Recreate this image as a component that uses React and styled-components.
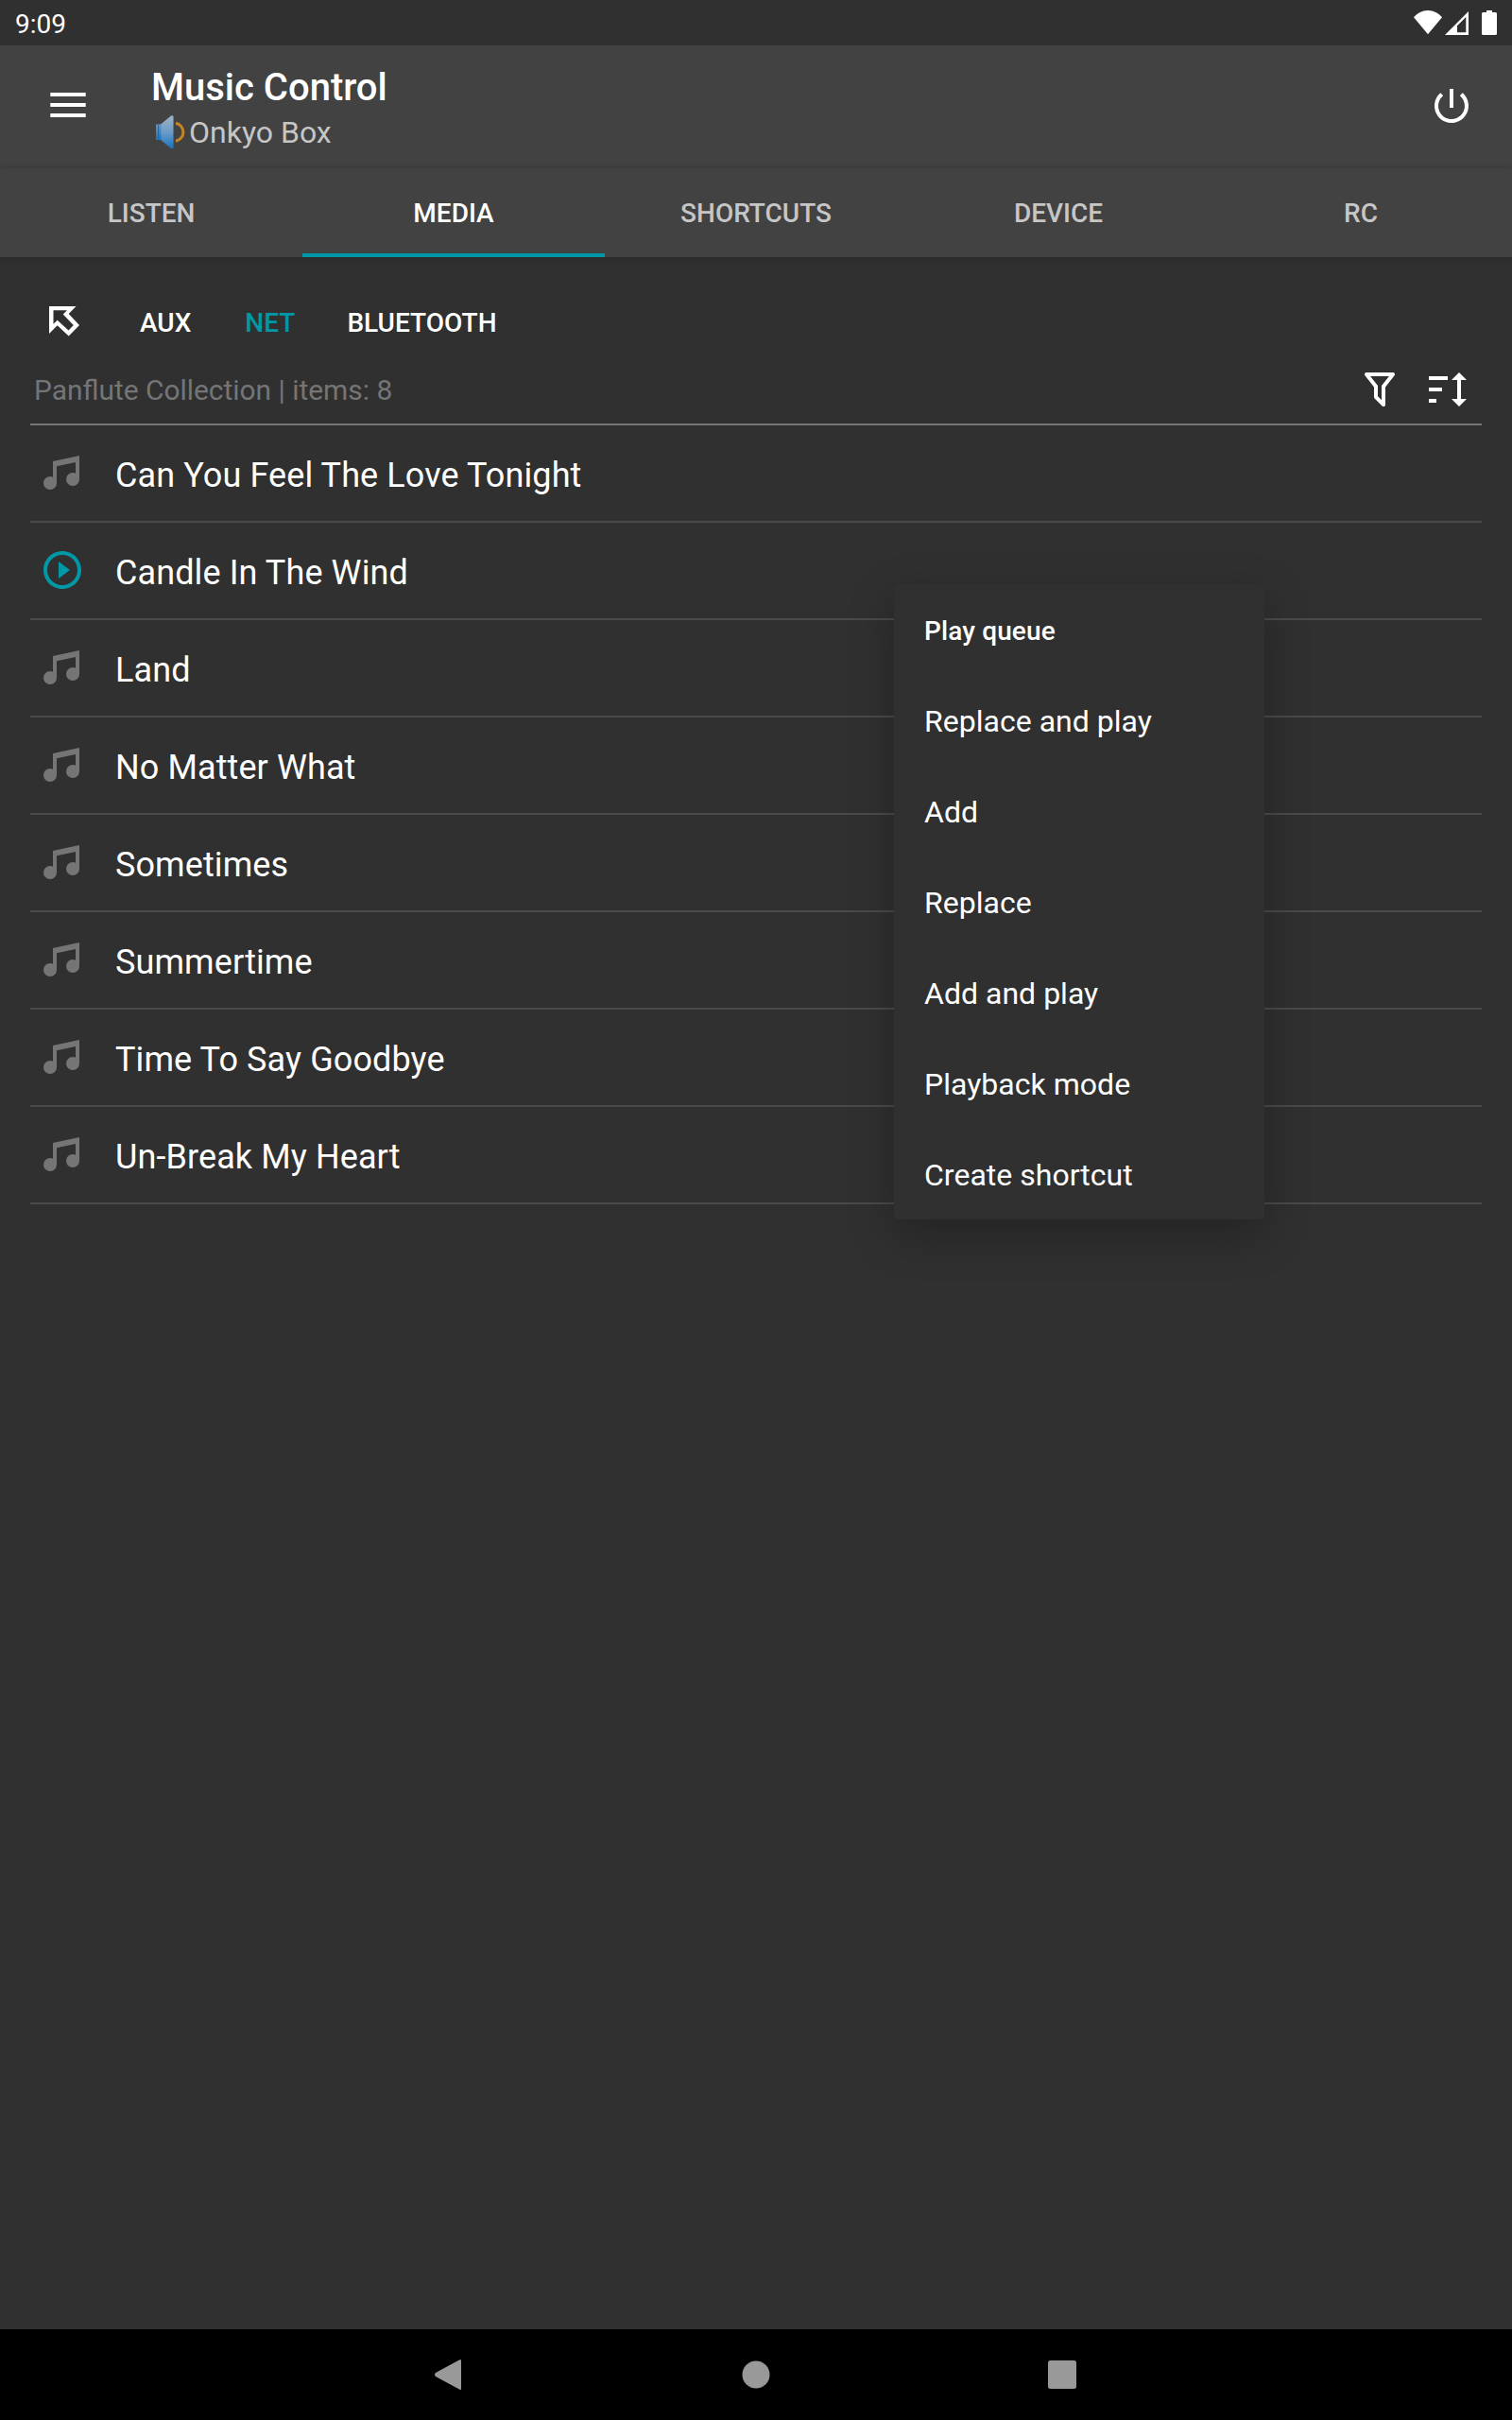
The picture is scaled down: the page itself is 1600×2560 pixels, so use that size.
import React from "react";
import styled, { createGlobalStyle } from "styled-components";

const GlobalStyle = createGlobalStyle`
  * { box-sizing: border-box; }
  body { margin: 0; background: #303030; font-family: Roboto, "Noto Sans", sans-serif; color: #fff; }
  svg { display: block; flex: none; }
`;

const Screen = styled.div`
  position: relative;
  width: 1600px;
  height: 2560px;
  display: flex;
  flex-direction: column;
  background: #303030;
  overflow: hidden;
`;

const StatusBar = styled.header`
  height: 48px;
  display: flex;
  align-items: center;
  justify-content: space-between;
  padding: 0 14px 0 16px;
`;

const Clock = styled.div`
  padding-top: 3px;
  font-size: 28px;
  line-height: 44px;
`;

const Toolbar = styled.div`
  height: 128px;
  display: flex;
  align-items: center;
  padding: 0 40px 0 48px;
  background: #424242;
`;

const MenuButton = styled.div`
  width: 112px;
  padding: 0 0 2px 5px;
`;

const Titles = styled.div`
  flex: 1;
  display: flex;
  flex-direction: column;
  padding-top: 8px;
`;

const Title = styled.h1`
  margin: 0;
  font-size: 40px;
  font-weight: 500;
  line-height: 48px;
`;

const Subtitle = styled.div`
  display: flex;
  align-items: center;
  padding-left: 5px;
  font-size: 32px;
  line-height: 47px;
  color: #c6c6c6;
`;

const Tabs = styled.nav`
  height: 96px;
  display: flex;
  background: #424242;
  box-shadow: inset 0 2px 1px rgba(0, 0, 0, 0.09), 0 2px 6px rgba(0, 0, 0, 0.12);
`;

const Tab = styled.div`
  flex: 1;
  display: flex;
  align-items: center;
  justify-content: center;
  padding-top: 7px;
  font-size: 28px;
  font-weight: 500;
  color: ${(p) => (p.$active ? "#fff" : "#c6c6c6")};
  border-bottom: 4px solid ${(p) => (p.$active ? "#0097a7" : "transparent")};
`;

const Content = styled.main`
  flex: 1;
  padding: 20px 32px 0;
`;

const Sources = styled.div`
  height: 96px;
  display: flex;
  align-items: center;
  padding-left: 10px;
`;

const SourceIcon = styled.div`
  width: 106px;
  padding-bottom: 4px;
`;

const Source = styled.div`
  margin-right: ${(p) => p.$gap || 0}px;
  padding-top: 3px;
  font-size: 28px;
  font-weight: 500;
  color: ${(p) => (p.$active ? "#0097a7" : "#fff")};
`;

const ListHeader = styled.div`
  height: 62px;
  display: flex;
  gap: 24px;
  padding: 0 12px 12px 4px;
  align-items: center;
  border-bottom: 2px solid #757575;
`;

const Path = styled.div`
  flex: 1;
  padding-top: 2px;
  font-size: 29.9px;
  line-height: 46px;
  color: #757575;
`;

const Row = styled.div`
  height: 103px;
  display: flex;
  align-items: center;
  padding: 0 10px 1px;
  border-bottom: 2px solid #4a4a4a;
`;

const RowLabel = styled.div`
  padding: 5px 0 0 32px;
  font-size: 36px;
  line-height: 44px;
  letter-spacing: 0.1px;
`;

const Popup = styled.div`
  position: absolute;
  left: 946px;
  top: 618px;
  width: 392px;
  border-radius: 4px;
  background: #303030;
  box-shadow: 0 16px 48px rgba(0, 0, 0, 0.27);
`;

const PopupItem = styled.div`
  height: 96px;
  display: flex;
  align-items: center;
  padding: 2px 32px 0;
  font-size: ${(p) => (p.$heading ? 28 : 32)}px;
  font-weight: ${(p) => (p.$heading ? 500 : 400)};
  letter-spacing: ${(p) => (p.$heading ? 0.12 : 0.02)}px;
`;

const NavBar = styled.footer`
  height: 96px;
  display: flex;
  align-items: center;
  justify-content: center;
  gap: 276px;
  background: #000;
`;

const Icon = ({ d, fill = "#fff" }) => (
  <svg width="48" height="48" viewBox="0 0 24 24" fill={fill}>
    <path d={d} />
  </svg>
);

const POWER =
  "M13 3h-2v10h2V3zm4.83 2.17l-1.42 1.42C17.99 7.86 19 9.81 19 12c0 3.87-3.13 7-7 7s-7-3.13-7-7c0-2.19 1.01-4.14 2.58-5.42L6.17 5.17C4.23 6.82 3 9.26 3 12c0 4.97 4.03 9 9 9s9-4.03 9-9c0-2.74-1.23-5.18-3.17-6.83z";
const NOTE =
  "M21,3V15.5A3.5,3.5 0 0,1 17.5,19A3.5,3.5 0 0,1 14,15.5A3.5,3.5 0 0,1 17.5,12C18.04,12 18.55,12.12 19,12.34V6.47L9,8.6V17.5A3.5,3.5 0 0,1 5.5,21A3.5,3.5 0 0,1 2,17.5A3.5,3.5 0 0,1 5.5,14C6.04,14 6.55,14.12 7,14.34V6L21,3Z";
const PLAY =
  "M10 16.5l6-4.5-6-4.5v9zM12 2C6.48 2 2 6.48 2 12s4.48 10 10 10 10-4.48 10-10S17.52 2 12 2zm0 18c-4.41 0-8-3.59-8-8s3.59-8 8-8 8 3.59 8 8-3.59 8-8 8z";
const FILTER =
  "M15,19.88C15.04,20.18 14.94,20.5 14.71,20.71C14.32,21.1 13.69,21.1 13.3,20.71L9.29,16.7C9.06,16.47 8.96,16.16 9,15.87V10.75L4.21,4.62C3.87,4.19 3.95,3.56 4.38,3.22C4.57,3.08 4.78,3 5,3V3H19V3C19.22,3 19.43,3.08 19.62,3.22C20.05,3.56 20.13,4.19 19.79,4.62L15,10.75V19.88M7.04,5L11,10.06V15.58L13,17.58V10.05L16.96,5H7.04Z";
const SORT = "M18 21L14 17H17V7H14L18 3L22 7H19V17H22L18 21ZM2 5H12V7H2ZM2 11H9V13H2ZM2 17H6V19H2Z";

const StatusIcons = () => (
  <svg width="92" height="28" viewBox="1494 10 92 28" fill="#fff">
    <path d="M1496 18.3C1500 14 1505 11 1511 11S1522 14 1526 18.3L1511 36.3Z" />
    <path fillRule="evenodd" d="M1554 12V37H1529ZM1551.3 18L1542 27.3V34.3H1551.3Z" />
    <path d="M1573 11h6v2h3.400a1.600 1.600 0 0 1 1.600 1.600v20.800a1.600 1.600 0 0 1-1.600 1.600h-12.800a1.600 1.600 0 0 1-1.600-1.600v-20.800a1.600 1.600 0 0 1 1.600-1.600h3.400z" />
  </svg>
);

const Speaker = () => (
  <svg width="35" height="36" viewBox="0 0 35 36">
    <defs>
      <linearGradient id="cone" x1="0" y1="0" x2="0" y2="1">
        <stop offset="0" stopColor="#a3b3c2" />
        <stop offset="0.5" stopColor="#6b9cc8" />
        <stop offset="1" stopColor="#1a73bd" />
      </linearGradient>
      <linearGradient id="magnet" x1="0" y1="0" x2="0" y2="1">
        <stop offset="0" stopColor="#6396c4" />
        <stop offset="1" stopColor="#1c74bd" />
      </linearGradient>
    </defs>
    <path d="M5 9.500L16 0.500Q18.300-0.400 18.500 1.500V34Q18.300 36 16 35L5 26Z" fill="url(#cone)" />
    <path d="M0 9.500H5.500V26H0Z" fill="url(#magnet)" />
    <path d="M2.500 9.500V26" stroke="#2469a3" strokeWidth="1" />
    <path d="M21 8.300A9.600 9.600 0 0 1 21 27.200" fill="none" stroke="#c48529" strokeWidth="3" />
  </svg>
);

const tabs = ["LISTEN", "MEDIA", "SHORTCUTS", "DEVICE", "RC"];
const tracks = [
  "Can You Feel The Love Tonight",
  "Candle In The Wind",
  "Land",
  "No Matter What",
  "Sometimes",
  "Summertime",
  "Time To Say Goodbye",
  "Un-Break My Heart",
];
const actions = ["Replace and play", "Add", "Replace", "Add and play", "Playback mode", "Create shortcut"];

export default function App() {
  return (
    <Screen>
      <GlobalStyle />
      <StatusBar>
        <Clock>9:09</Clock>
        <StatusIcons />
      </StatusBar>
      <Toolbar>
        <MenuButton>
          <svg width="38" height="26" viewBox="0 0 38 26" fill="#fff">
            <path d="M0.300 0H37.700V4H0.300ZM0.300 11H37.700V15H0.300ZM0.300 22H37.700V26H0.300Z" />
          </svg>
        </MenuButton>
        <Titles>
          <Title>Music Control</Title>
          <Subtitle>
            <Speaker />
            <span>Onkyo Box</span>
          </Subtitle>
        </Titles>
        <Icon d={POWER} />
      </Toolbar>
      <Tabs>
        {tabs.map((t) => (
          <Tab key={t} $active={t === "MEDIA"}>{t}</Tab>
        ))}
      </Tabs>
      <Content>
        <Sources>
          <SourceIcon>
            <svg width="48" height="48" viewBox="0 0 48 48" fill="#fff">
              <path
                fillRule="evenodd"
                d="M10 10H38.500L30.700 18L42 30L30.700 41.500L18.700 30.300L10 39ZM14.500 14.300V28.700L18.700 24.700L30.500 35.500L35.800 30L24.700 18.500L29 14.300Z"
              />
            </svg>
          </SourceIcon>
          <Source $gap={57}>AUX</Source>
          <Source $gap={55} $active>NET</Source>
          <Source>BLUETOOTH</Source>
        </Sources>
        <ListHeader>
          <Path>Panflute Collection | items: 8</Path>
          <Icon d={FILTER} />
          <Icon d={SORT} />
        </ListHeader>
        {tracks.map((t, i) => (
          <Row key={t}>
            <Icon d={i === 1 ? PLAY : NOTE} fill={i === 1 ? "#0097a7" : "#757575"} />
            <RowLabel>{t}</RowLabel>
          </Row>
        ))}
      </Content>
      <Popup>
        <PopupItem $heading>Play queue</PopupItem>
        {actions.map((a) => (
          <PopupItem key={a}>{a}</PopupItem>
        ))}
      </Popup>
      <NavBar>
        <svg width="48" height="48" viewBox="0 0 48 48" fill="#999">
          <path d="M36 9.500V38.500Q36 41 34 39.500L9 26Q7 24 9 22L34 8.500Q36 7 36 9.500Z" />
        </svg>
        <svg width="48" height="48" viewBox="0 0 48 48" fill="#999">
          <circle cx="24" cy="24" r="14.500" />
        </svg>
        <svg width="48" height="48" viewBox="0 0 48 48" fill="#999">
          <rect x="9" y="9" width="30" height="30" rx="2.500" />
        </svg>
      </NavBar>
    </Screen>
  );
}
